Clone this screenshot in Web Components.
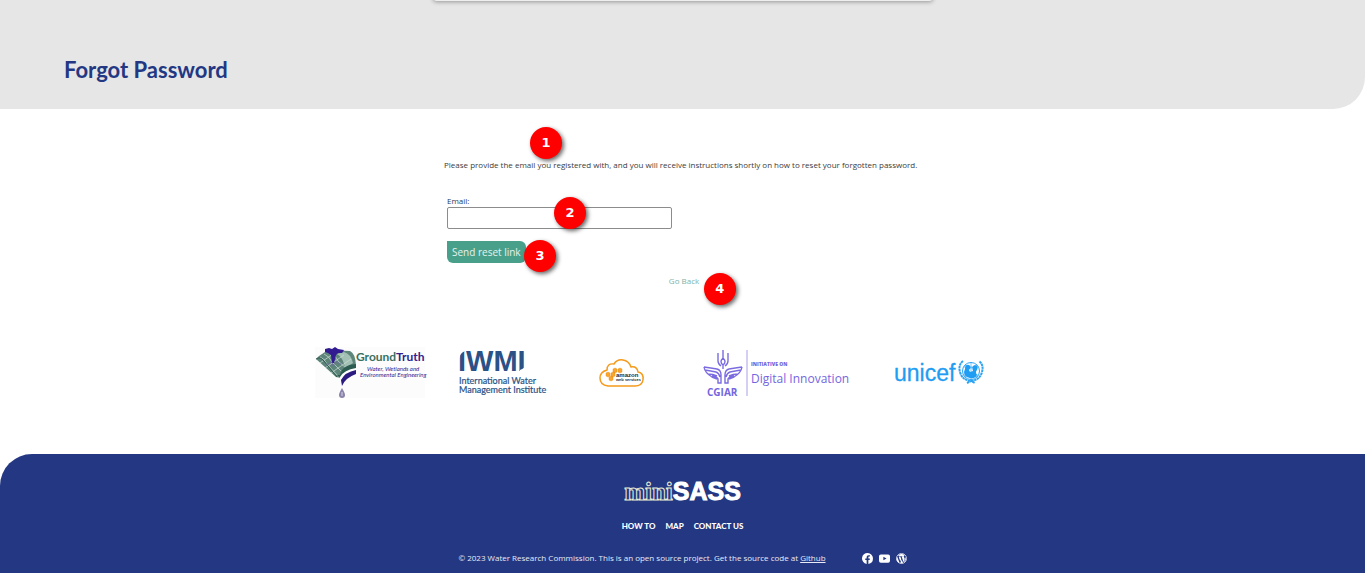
<!DOCTYPE html>
<html lang="en">
<head>
<meta charset="utf-8">
<meta name="viewport" content="width=device-width, initial-scale=1">
<title>Forgot Password - miniSASS</title>
<style>
  body { margin: 0; background: #fff; font-family: "Open Sans", "Noto Sans", sans-serif; font-size: 8px; line-height: 12px; color: #3b3b3b; --navy: #233783; --green: #48a08a; }
</style>
</head>
<body>
<forgot-page></forgot-page>

<template id="t-page">
  <style>
    :host { display: flex; flex-direction: column; min-height: 100vh; }
    main { flex: 1; padding: 50px 16px 56px; }
  </style>
  <page-banner>Forgot Password</page-banner>
  <main>
    <reset-form></reset-form>
    <partner-logos></partner-logos>
  </main>
  <site-footer></site-footer>
</template>

<template id="t-banner">
  <style>
    :host { display: block; position: relative; background: #e6e6e6; border-radius: 0 0 32px 0; padding: 56px 64px 25px; }
    .tab { position: absolute; bottom: 100%; left: 50%; width: 500px; max-width: 90%; height: 20px; margin-bottom: -1px; transform: translateX(-50%); background: #eee; border-radius: 4px; box-shadow: 0 1px 4px rgba(0,0,0,.35); }
    h1 { margin: 0; font: 700 22px/28px Lato, "Open Sans", sans-serif; color: var(--navy); }
  </style>
  <div class="tab"></div>
  <h1><slot></slot></h1>
</template>

<template id="t-marker">
  <style>
    :host { position: absolute; display: grid; place-items: center; width: 32px; height: 32px; border-radius: 50%; background: #f00; color: #fff; font: 700 13px/16px "DejaVu Sans", sans-serif; box-shadow: 2px 2px 4px rgba(0,0,0,.6); }
  </style>
  <slot></slot>
</template>

<template id="t-form">
  <style>
    :host { display: block; max-width: 477px; margin: 0 auto; }
    p { position: relative; margin: 0 0 24px; }
    form { display: flex; flex-direction: column; align-items: flex-start; padding-left: 3px; }
    label { color: #1f3d63; }
    .field, .action, .back { position: relative; }
    .field { width: 225px; max-width: 100%; }
    input { display: block; box-sizing: border-box; width: 100%; height: 22px; padding: 2px 6px; border: 1px solid #8c8c8c; border-radius: 2px; background: #fff; font: inherit; }
    .action { margin: 12px 0; }
    button { display: block; height: 22px; padding: 0 5px; border: 0; border-radius: 0 6px 6px 6px; background: var(--green); color: #e4f3ef; font: 10px/22px "Open Sans", sans-serif; white-space: nowrap; }
    .back { align-self: center; }
    a { color: #80b3a6; text-decoration: none; }
    .m1 { left: 86px; bottom: 12px; }
    .m2 { left: 107px; top: -10px; }
    .m3 { left: 77px; top: -1px; }
    .m4 { left: 35px; top: -2px; }
  </style>
  <p>Please provide the email you registered with, and you will receive instructions shortly on how to reset your forgotten password.<step-marker class="m1">1</step-marker></p>
  <form>
    <label for="email">Email:</label>
    <div class="field"><input id="email" type="email"><step-marker class="m2">2</step-marker></div>
    <div class="action"><button type="button">Send reset link</button><step-marker class="m3">3</step-marker></div>
    <div class="back"><a href="#login">Go Back</a><step-marker class="m4">4</step-marker></div>
  </form>
</template>

<template id="t-logos">
  <style>
    :host { display: flex; flex-wrap: wrap; justify-content: center; gap: 34px; margin-top: 59px; padding-right: 66px; }
    svg { display: block; height: 52px; overflow: visible; }
    .lato { font-family: Lato, sans-serif; }
    .open { font-family: "Open Sans", sans-serif; }
    .lib { font-family: "Liberation Sans", sans-serif; }
  </style>
  <svg width="110" viewBox="0 0 110 52" role="img" aria-label="GroundTruth">
    <rect y="1" width="110" height="51" fill="#fcfcfc"/>
    <path d="M1 13L4 10L13 4L35 5Q40 7 41 19Q27 21 26 32L21 31Z" fill="#5d8579"/>
    <path d="M29 6Q36 8 38 17L30 22Q28 11 22 8Z" fill="#a3c0b5"/>
    <path d="M5 11Q9 12 12 18L23 30M9 8Q14 10 17 16L27 26M13 6Q20 8 23 15L31 22M5 17L18 8M10 22L29 9M16 27L36 13" fill="none" stroke="#cfe0d9" stroke-width=".7"/>
    <path d="M1 13Q5 10 9 15L22 31" fill="none" stroke="#315b50" stroke-width="1"/>
    <path d="M21 29Q27 30 26 37Q27 27 41 24V18Q27 19 25 29Z" fill="#2d5c50"/>
    <path d="M25 31V36Q29 28 41 26V22Q29 24 25 31Z" fill="#fff"/>
    <path d="M26 34L27 40Q30 32 41 28V24Q30 26 26 34Z" fill="#2b1a80"/>
    <path d="M10 3L14 2 17 3 20 1 23 3 29 4 27 7 23 7 21 9 19 17H17L16 9 13 7 10 6Z" fill="#321a91"/>
    <path d="M11 19L17 16L18 20L21 16L26 18" fill="none" stroke="#7563ad" stroke-width=".6"/>
    <path d="M27 42Q24 47 24 49Q24 52 27 52Q30 52 30 49Q30 47 27 42Z" fill="#8984aa"/>
    <path d="M27 46V50" stroke="#d7d3e5"/>
    <text class="lato" x="41" y="15" font-size="12" font-weight="700" fill="#39705f">Ground<tspan fill="#32208c">Truth</tspan></text>
    <g class="lato" font-size="6" font-style="italic" fill="#352391"><text x="52" y="25">Water, Wetlands and</text><text x="45" y="31">Environmental Engineering</text></g>
  </svg>
  <svg width="106" viewBox="0 0 106 52" role="img" aria-label="IWMI">
    <g fill="#2b5286"><text class="lib" x="-1" y="25" font-size="29" font-weight="700">IWMI</text>
    <g class="lato" font-size="9" stroke="#2b5286" stroke-width=".2"><text x="0" y="38">International Water</text><text x="0" y="47">Management Institute</text></g></g>
    <path d="M0 3V13Q1 7 6 5V3ZM68 26V16Q67 22 61 24V26Z" fill="#fff"/>
  </svg>
  <svg width="70" viewBox="0 0 70 52" role="img" aria-label="Amazon Web Services">
    <path d="M9 40Q1 39 1 32Q1 26 8 24Q8 17 15 18Q18 13 24 14Q30 15 32 21Q38 20 39 26Q45 27 44 34Q43 40 36 40Z" fill="#fff" stroke="#f59a1b" stroke-width="1.5"/>
    <path d="M14 23l2-1 2 1v3l-2 1-2-1zM19 23l2-1 2 1v3l-2 1-2-1zM7 27l2-1 2 1v3l-2 1-2-1zM12 27l2-1 2 1v3l-2 1-2-1zM10 31l2-1 2 1v3l-2 1-2-1z" fill="#f8a62f" stroke="#e98a0c" stroke-width=".4"/>
    <g class="lib" font-weight="700" fill="#2c2c2c"><text x="17" y="31" font-size="6">amazon</text><text x="17" y="35" font-size="4">web services</text></g>
  </svg>
  <svg width="157" viewBox="0 0 157 52" role="img" aria-label="CGIAR Initiative on Digital Innovation">
    <g fill="none" stroke="#7a6ce0" stroke-width="1.4">
      <path d="M20 4V12M15 7V15Q15 18 18 20M25 7V15Q25 18 22 20M20 12Q16 16 20 19Q24 16 20 12M20 19V23"/>
      <path d="M1 21Q8 22 14 23Q18 24 18 29V37H15V33Q13 30 9 30M2 24Q8 25 13 26Q16 27 17 31M5 28Q10 28 14 30M1 21Q2 27 9 31L14 33"/>
      <path d="M39 21Q32 22 26 23Q22 24 22 29V37H25V33Q27 30 31 30M38 24Q32 25 27 26Q24 27 23 31M35 28Q30 28 26 30M39 21Q38 27 31 31L26 33"/>
    </g>
    <path d="M44 4V50" stroke="#a79fea"/>
    <g class="open" fill="#7466e0"><text x="4" y="50" font-size="10" font-weight="700">CGIAR</text><text x="48" y="20" font-size="5" font-weight="800">INITIATIVE ON</text><text x="48" y="37" font-size="12">Digital Innovation</text></g>
  </svg>
  <svg width="90" viewBox="0 0 90 52" role="img" aria-label="unicef">
    <text class="lib" x="0" y="35" font-size="23" fill="#1f9df2" stroke="#1f9df2" stroke-width=".3">unicef</text>
    <g fill="none" stroke="#2ba3f3">
      <circle cx="77" cy="25" r="8.500"/><path d="M69 21H85M69 29H85M77 16V34M71 19Q77 25 83 19M71 31Q77 25 83 31" stroke-width=".6"/>
      <path d="M69 15Q64 19 66 26Q68 34 77 35Q86 34 88 26Q90 19 85 15M73 37L77 35L81 37" stroke-width="2" stroke-dasharray="2.500 .5"/>
    </g>
    <path d="M71 23Q71 18 75 19Q78 21 75 24L76 26L79 25Q77 20 81 19Q85 20 83 24Q81 26 83 29Q81 33 76 32Q70 31 70 26Z" fill="#1f9df2"/>
  </svg>
</template>

<template id="t-footer">
  <style>
    :host { display: flex; flex-direction: column; align-items: center; padding: 25px 16px 10px; background: var(--navy); border-radius: 32px 0 0 0; color: #e8ebf5; }
    a { color: inherit; }
    .brand { font: 700 25px/24px "Liberation Sans", sans-serif; color: #fff; -webkit-text-stroke: 1px #fff; }
    .brand span { font-family: "Liberation Serif", serif; color: var(--navy); -webkit-text-stroke: 1px #e9ecd2; }
    nav { display: flex; gap: 10px; margin: 16px 0 20px; color: #fff; }
    nav a { font: 900 8px/12px Lato, sans-serif; text-decoration: none; }
    .row { display: flex; flex-wrap: wrap; align-items: center; justify-content: center; gap: 12px 36px; }
    .social { display: flex; gap: 6px; }
    .social a { display: block; height: 11px; }
    svg { display: block; width: 11px; height: 11px; }
  </style>
  <div class="brand"><span>mini</span>SASS</div>
  <nav><a href="#howto">HOW TO</a><a href="#map">MAP</a><a href="#contact">CONTACT US</a></nav>
  <div class="row">
    <div>© 2023 Water Research Commission. This is an open source project. Get the source code at <a href="#github">Github</a></div>
    <div class="social">
      <a href="#facebook" aria-label="Facebook"><svg viewBox="0 0 24 24"><path fill="#fff" d="M24 12A12 12 0 1 0 10.100 23.900V15.500H7.100V12H10.100V9.400C10.100 6.400 11.900 4.700 14.600 4.700L17.300 4.900V7.900H15.800C14.300 7.900 13.900 8.800 13.900 9.700V12H17.200L16.700 15.500H13.900V23.900A12 12 0 0 0 24 12Z"/></svg></a>
      <a href="#youtube" aria-label="YouTube"><svg viewBox="0 0 24 24"><path fill="#fff" fill-rule="evenodd" d="M4 3H20Q24 3 24 7V17Q24 21 20 21H4Q0 21 0 17V7Q0 3 4 3ZM9.500 8V16L16.500 12Z"/></svg></a>
      <a href="#wordpress" aria-label="WordPress"><svg viewBox="0 0 24 24"><circle cx="12" cy="12" r="11" fill="none" stroke="#fff" stroke-width="1.500"/><path fill="#fff" d="M2.500 8L8 22A10 10 0 0 1 2.500 8ZM4 6A10 10 0 0 1 19 5Q16 6 17.500 9Q20 12 18 16L16.500 20L12.500 8H14V7H8V8H9.500L11.500 13L9.500 18.500L6 8H7.500V6ZM12.300 14L15.300 22Q12 23 9.500 22ZM21.300 8Q23.500 16 17 21L20 13Q21.300 10 21.300 8Z"/></svg></a>
    </div>
  </div>
</template>

<script>
  const define = (name, templateId) => customElements.define(name, class extends HTMLElement {
    constructor() {
      super();
      this.attachShadow({ mode: 'open' }).append(document.getElementById(templateId).content.cloneNode(true));
    }
  });
  define('step-marker', 't-marker');
  define('page-banner', 't-banner');
  define('reset-form', 't-form');
  define('partner-logos', 't-logos');
  define('site-footer', 't-footer');
  define('forgot-page', 't-page');
</script>
</body>
</html>
